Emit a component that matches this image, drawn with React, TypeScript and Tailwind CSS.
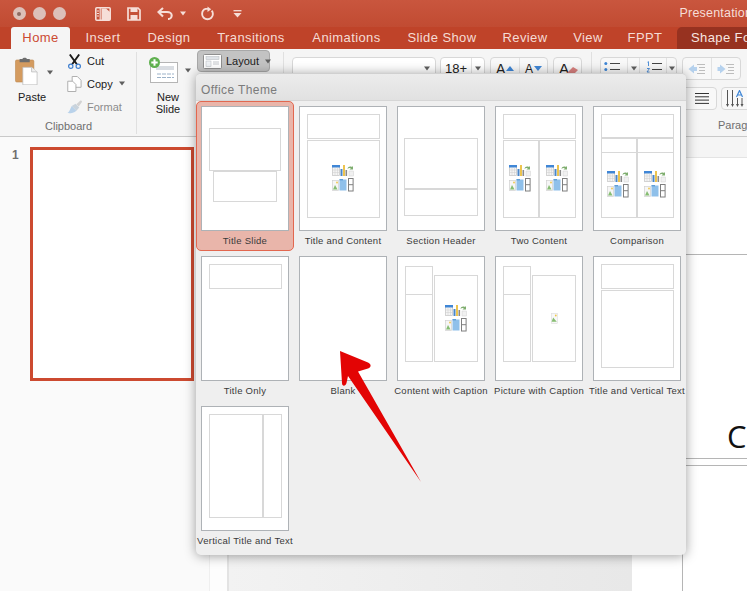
import React from "react";

const tabs = [
  { t: "Insert", w: "w-[66px]" },
  { t: "Design", w: "w-[66px]" },
  { t: "Transitions", w: "w-[98px]" },
  { t: "Animations", w: "w-[93px]" },
  { t: "Slide Show", w: "w-[98px]" },
  { t: "Review", w: "w-[68px]" },
  { t: "View", w: "w-[58px]" },
  { t: "FPPT", w: "w-[56px]" },
];

function Caret({ className = "" }: { className?: string }) {
  return (
    <svg width="6" height="5" viewBox="0 0 6 5" className={`shrink-0 ${className}`}>
      <path d="M0 0.5H6L3 4.5Z" fill="#5f5f5f" />
    </svg>
  );
}

function Cluster({ x, y }: { x: number; y: number }) {
  return (
    <g transform={`translate(${x} ${y})`}>
      <rect x="0.5" y="0.5" width="7" height="10" fill="#f4f4f4" stroke="#c4c4c4" strokeWidth="0.7" />
      <rect x="0" y="0" width="8" height="2.5" fill="#3f86d6" />
      <path d="M0 5H8M0 7.5H8M3 2.5V11M5.5 2.5V11" stroke="#cfcfcf" strokeWidth="0.5" />
      <rect x="8.5" y="4" width="2" height="7" fill="#4a86c8" />
      <rect x="11" y="0" width="2" height="11" fill="#ecc44f" />
      <rect x="13.5" y="5" width="1.6" height="6" fill="#8a8a8a" />
      <path d="M15.5 4C16 1.5 18 1 20 2L21 1V4.5H17.5L18.8 3.2C17.5 2.8 16.5 3 15.5 4Z" fill="#7fae6f" />
      <rect x="17" y="6" width="4.5" height="5" fill="#f1f1f1" stroke="#cfcfcf" strokeWidth="0.5" />
      <rect x="0.5" y="15.5" width="6" height="10" fill="#f6f6f6" stroke="#d0d0d0" strokeWidth="0.7" />
      <path d="M1 24.5L3 20L5.5 24.5Z" fill="#86bd72" />
      <circle cx="5" cy="17.5" r="0.9" fill="#f0c64a" />
      <rect x="7.5" y="14.5" width="7" height="11" fill="#8fc0ea" />
      <rect x="7.5" y="14" width="3.5" height="1.4" fill="#5f9fd8" />
      <rect x="16.5" y="13.5" width="4.6" height="12.5" fill="#fff" stroke="#7f7f7f" strokeWidth="1" />
      <path d="M16.5 19.7H21" stroke="#7f7f7f" strokeWidth="1" />
    </g>
  );
}

function Pic({ x, y }: { x: number; y: number }) {
  return (
    <g transform={`translate(${x} ${y})`}>
      <rect x="0.3" y="0.3" width="6" height="10" fill="#f8f8f8" stroke="#dddddd" strokeWidth="0.6" />
      <path d="M0.6 8.8L2.2 4.5L3.8 6.5L5.8 8.8Z" fill="#86bd72" />
      <circle cx="4.8" cy="2.5" r="0.9" fill="#f0c64a" />
    </g>
  );
}

type R = [number, number, number, number];

function Thumb({ rects, children }: { rects: R[]; children?: React.ReactNode }) {
  return (
    <div className="w-[88px] h-[125px] shrink-0 border border-[#aeb2b6] bg-white">
      <svg width="86" height="123" viewBox="1 1 86 123" className="block">
        {rects.map(([a, b, c, d], i) => (
          <rect key={i} x={a + 0.5} y={b + 0.5} width={c - a} height={d - b} fill="none" stroke="#d8d8d8" strokeWidth="1" />
        ))}
        {children}
      </svg>
    </div>
  );
}

const layouts: { label: string; rects: R[]; extra?: React.ReactNode; selected?: boolean }[] = [
  { label: "Title Slide", selected: true, rects: [[8, 22, 79, 64], [12, 65, 75, 95]] },
  { label: "Title and Content", rects: [[8, 8, 80, 32], [8, 34, 80, 111]], extra: <Cluster x={33} y={59} /> },
  { label: "Section Header", rects: [[7, 32, 80, 82], [7, 83, 80, 109]] },
  {
    label: "Two Content",
    rects: [[8, 8, 80, 32], [8, 34, 43, 111], [44, 34, 80, 111]],
    extra: (
      <>
        <Cluster x={14} y={59} />
        <Cluster x={51} y={59} />
      </>
    ),
  },
  {
    label: "Comparison",
    rects: [[8, 8, 80, 31], [8, 32, 43, 46], [44, 32, 80, 46], [8, 46, 43, 111], [44, 46, 80, 111]],
    extra: (
      <>
        <Cluster x={14} y={65} />
        <Cluster x={51} y={65} />
      </>
    ),
  },
  { label: "Title Only", rects: [[8, 8, 80, 32]] },
  { label: "Blank", rects: [] },
  {
    label: "Content with Caption",
    rects: [[8, 10, 35, 38], [8, 38, 35, 105], [37, 19, 80, 105]],
    extra: <Cluster x={48} y={49} />,
  },
  {
    label: "Picture with Caption",
    rects: [[8, 10, 35, 38], [8, 38, 35, 105], [37, 19, 80, 105]],
    extra: <Pic x={56} y={57} />,
  },
  { label: "Title and Vertical Text", rects: [[8, 8, 80, 32], [8, 34, 80, 111]] },
  { label: "Vertical Title and Text", rects: [[8, 8, 61, 111], [62, 8, 80, 111]] },
];

function LayoutMenu() {
  return (
    <div className="absolute left-[196px] top-[73px] w-[490px] h-[482px] rounded-[5px] bg-[#efefef] border-t border-[#d0d0d0] shadow-[0_1px_12px_rgba(0,0,0,0.38)] overflow-hidden">
      <div className="h-[27px] border-b border-[#d6d6d6] bg-gradient-to-b from-[#ececec] to-[#e1e1e1] pl-[5px] pt-[7px] text-[12px] leading-[18px] tracking-[0.4px] text-[#7b7b7b]">
        Office Theme
      </div>
      <div className="grid grid-cols-[repeat(5,98px)] auto-rows-[150px]">
        {layouts.map((l) => (
          <div
            key={l.label}
            className={
              l.selected
                ? "flex flex-col items-center pt-[4px] rounded-[5px] border border-[#e2674f] bg-[#e9b5aa]"
                : "flex flex-col items-center pt-[4px] border border-transparent"
            }
          >
            <Thumb rects={l.rects}>{l.extra}</Thumb>
            <div className="mt-[3px] whitespace-nowrap text-[9.5px] leading-[14px] tracking-[0.27px] text-[#3a3a3a]">{l.label}</div>
          </div>
        ))}
      </div>
    </div>
  );
}

function TitleBar() {
  return (
    <div className="h-[27px] flex items-center bg-gradient-to-b from-[#c9563e] to-[#c14b32] text-[#f6ded8]">
      <div className="flex items-center gap-[7.5px] pl-[13px]">
        <div className="w-[12.5px] h-[12.5px] rounded-full bg-[#dcc0b9] flex items-center justify-center">
          <div className="w-[4px] h-[4px] rounded-full bg-[#8c6a62]" />
        </div>
        <div className="w-[12.5px] h-[12.5px] rounded-full bg-[#dcc0b9]" />
        <div className="w-[12.5px] h-[12.5px] rounded-full bg-[#dcc0b9]" />
      </div>
      <div className="ml-[13px] w-px h-[16px] bg-[#b8462e]" />
      <svg width="16" height="14" viewBox="0 0 16 14" className="ml-[16px] shrink-0">
        <rect x="0.8" y="0.8" width="14.4" height="12.4" rx="1" fill="none" stroke="#f6ded8" strokeWidth="1.6" />
        <path d="M5.2 1V13" stroke="#f6ded8" strokeWidth="1.2" />
        <path d="M6.5 1.5H11L15 5V13H6.5Z" fill="#f6ded8" />
        <path d="M2 4H4M2 6.5H4M2 9H4" stroke="#f6ded8" strokeWidth="1" />
      </svg>
      <svg width="14" height="14" viewBox="0 0 14 14" className="ml-[16px] shrink-0">
        <path d="M1 1H11L13 3V13H1Z" fill="none" stroke="#f6ded8" strokeWidth="1.7" />
        <rect x="3.5" y="1" width="7" height="4" fill="#f6ded8" />
        <rect x="3.5" y="8" width="7" height="5" fill="#f6ded8" />
      </svg>
      <svg width="16" height="13" viewBox="0 0 16 13" className="ml-[16px] shrink-0">
        <path d="M6 1L1.5 5L6 9.5M2 5H10C13 5 14.7 6.8 14.7 8.4C14.7 10.4 13 12 11 12" fill="none" stroke="#f6ded8" strokeWidth="2.1" />
      </svg>
      <svg width="6" height="5" viewBox="0 0 6 5" className="ml-[7px] shrink-0">
        <path d="M0 0.5H6L3 4.5Z" fill="#f6ded8" />
      </svg>
      <svg width="13" height="15" viewBox="0 0 14 15" className="ml-[15px] shrink-0">
        <path d="M7.5 2.5H5C2.8 3.2 1.2 5.2 1.2 8C1.2 11.2 3.8 13.7 7 13.7C10.2 13.7 12.8 11.2 12.8 8C12.8 6.6 12.3 5.4 11.5 4.4" fill="none" stroke="#f6ded8" strokeWidth="2" />
        <path d="M7 0V6L11 3Z" fill="#f6ded8" />
      </svg>
      <svg width="9" height="8" viewBox="0 0 9 8" className="ml-[19px] shrink-0">
        <path d="M0.5 0.7H8.5" stroke="#f6ded8" strokeWidth="1.3" />
        <path d="M0.5 3H8.5L4.5 7.5Z" fill="#f6ded8" />
      </svg>
      <div className="ml-[438px] whitespace-nowrap text-[12.5px] leading-none tracking-[0.2px]">Presentation1</div>
    </div>
  );
}

function Tabs() {
  return (
    <div className="h-[22px] flex items-stretch pl-[11px] bg-[#bf4329] text-[13px] font-medium tracking-[0.4px] whitespace-nowrap">
      <div className="w-[59px] shrink-0 rounded-t-[3px] bg-[#f5f5f5] text-[#cc4a32] flex items-center justify-center">Home</div>
      {tabs.map((t) => (
        <div key={t.t} className={`${t.w} shrink-0 text-[#f5dcd5] flex items-center justify-center`}>
          {t.t}
        </div>
      ))}
      <div className="ml-[4px] flex-1 rounded-tl-[5px] bg-[#973220] text-[#f7e6e1] pl-[14px] flex items-center overflow-hidden">Shape Format</div>
    </div>
  );
}

function PasteIcon() {
  return (
    <svg width="23" height="28" viewBox="0 0 25 30" className="block shrink-0">
      <rect x="0.5" y="3" width="20" height="24" rx="1.5" fill="#d49b5f" stroke="#b88449" strokeWidth="0.6" />
      <path d="M5 4V2H8C8.5 0 12.5 0 13 2H16V5.5H5Z" fill="#6d6d6d" />
      <path d="M8.5 11H18L24 16V30H8.5Z" fill="#fff" stroke="#b9b9b9" strokeWidth="0.8" />
      <path d="M18 11V16H24" fill="#efefef" stroke="#b9b9b9" strokeWidth="0.8" />
    </svg>
  );
}

function SmallIcons({ kind }: { kind: "cut" | "copy" | "format" }) {
  if (kind === "cut")
    return (
      <svg width="15" height="15" viewBox="0 0 16 16" className="block shrink-0">
        <path d="M3 0.5L10.5 11M13 0.5L5.5 11" stroke="#1a1a1a" strokeWidth="2" />
        <circle cx="4" cy="13" r="2.3" fill="none" stroke="#3f7fcf" strokeWidth="1.3" />
        <circle cx="12" cy="13" r="2.3" fill="none" stroke="#3f7fcf" strokeWidth="1.3" />
      </svg>
    );
  if (kind === "copy")
    return (
      <svg width="15" height="16" viewBox="0 0 16 17" className="block shrink-0">
        <path d="M5.5 0.5H11L15 4.5V12H5.5Z" fill="#fff" stroke="#ababab" />
        <path d="M0.8 5.5H6L9.5 9V16.5H0.8Z" fill="#fff" stroke="#ababab" />
      </svg>
    );
  return (
    <svg width="16" height="15" viewBox="0 0 17 15" className="block shrink-0">
      <path d="M10 5L14 1.5C15 0.7 16.5 2 15.7 3L12.5 7.5Z" fill="#d3d3d3" />
      <path d="M9 4.5L13 8.5L10 12L5 7Z" fill="#c9d3dc" />
      <path d="M5 7L10 12C7 14.5 3 15 0.5 14.5C2.5 13.5 3 11 5 7Z" fill="#b9d2ea" />
    </svg>
  );
}

function Segment({ className, children }: { className: string; children?: React.ReactNode }) {
  return (
    <div className={`h-[23px] rounded-[4px] border border-[#d8d8d8] bg-[#f8f8f8] flex items-center shrink-0 ${className}`}>{children}</div>
  );
}

function ListLines({ numbered }: { numbered?: boolean }) {
  return (
    <svg width="17" height="16" viewBox="0 0 17 16" className="block shrink-0">
      <path d="M6 2.5H16M6 8.5H16" stroke="#444" strokeWidth="1" />
      {numbered ? (
        <path d="M1.5 1.2L2.5 0.7V5M1 7.5H3.5L1 11H3.5" fill="none" stroke="#3f86d6" strokeWidth="0.9" />
      ) : (
        <>
          <circle cx="1.8" cy="2.5" r="1.5" fill="#3f86d6" />
          <circle cx="1.8" cy="8.5" r="1.5" fill="#3f86d6" />
        </>
      )}
    </svg>
  );
}

function Indent({ flip }: { flip?: boolean }) {
  return (
    <svg width="18" height="12" viewBox="0 0 18 12" className="block shrink-0">
      {flip ? (
        <path d="M8.5 6L3 1.5V4H0.5V8H3V10.5Z" fill="#b6d2ee" />
      ) : (
        <path d="M0.5 6L6 1.5V4H9V8H6V10.5Z" fill="#b6d2ee" />
      )}
      <path d="M9 1.5H17M11 4.5H17M11 7.5H17M9 10.5H17" stroke="#bdbdbd" strokeWidth="1" />
    </svg>
  );
}

function Ribbon() {
  return (
    <div className="h-[88px] flex items-start bg-[#f5f5f5] border-b border-[#c9c9c9] text-[11px] leading-[12px] text-[#202020] whitespace-nowrap overflow-hidden">
      {/* Clipboard */}
      <div className="w-[137px] h-[82px] mt-[3px] shrink-0 border-r border-[#e0e0e0] flex flex-col">
        <div className="flex h-[68px]">
          <div className="w-[67px] shrink-0 pl-[15px] pt-[5px] flex flex-col">
            <div className="flex items-start gap-[9px]">
              <PasteIcon />
              <Caret className="mt-[13px]" />
            </div>
            <div className="mt-[6px] ml-[3px]">Paste</div>
          </div>
          <div className="flex flex-col -mt-[2px]">
            <div className="h-[22px] flex items-center gap-[5px]">
              <SmallIcons kind="cut" />
              <span>Cut</span>
            </div>
            <div className="h-[23px] flex items-center gap-[5px]">
              <SmallIcons kind="copy" />
              <span>Copy</span>
              <Caret className="ml-[1px]" />
            </div>
            <div className="h-[23px] flex items-center gap-[4px] text-[#8c8c8c]">
              <SmallIcons kind="format" />
              <span>Format</span>
            </div>
          </div>
        </div>
        <div className="pl-[45px] text-[#6f6f6f]">Clipboard</div>
      </div>
      {/* Slides */}
      <div className="w-[147px] h-[82px] mt-[3px] shrink-0 border-r border-[#e0e0e0] flex">
        <div className="w-[60px] shrink-0 flex flex-col pt-[5px]">
          <div className="flex items-center pl-[12px]">
            <svg width="30" height="26" viewBox="0 0 30 26" className="block shrink-0">
              <rect x="1.5" y="5.5" width="27" height="20" fill="#fff" stroke="#b5b5b5" />
              <rect x="7" y="9" width="18" height="4" fill="#d9dde2" />
              <path d="M8 17H25M8 20.5H25" stroke="#9cb2c8" strokeWidth="1" strokeDasharray="4 1" />
              <circle cx="5.5" cy="5.5" r="5.5" fill="#5fb04f" />
              <path d="M5.5 2.3V8.7M2.3 5.5H8.7" stroke="#fff" strokeWidth="2" />
            </svg>
            <Caret className="ml-[6px]" />
          </div>
          <div className="mt-[8px] w-[62px] text-center">
            New
            <br />
            Slide
          </div>
        </div>
        <div className="-mt-[2px]">
          <div className="h-[22px] w-[73px] rounded-[4px] border border-[#a8a8a8] bg-[#c3c3c3] flex items-center pl-[5px] gap-[4px]">
            <svg width="19" height="15" viewBox="0 0 19 15" className="block shrink-0">
              <rect x="0.5" y="0.5" width="18" height="14" rx="1" fill="#fff" stroke="#8f8f8f" />
              <rect x="3" y="2.5" width="13" height="3" fill="#dfe3e8" stroke="#b4b8bd" strokeWidth="0.5" />
              <rect x="3" y="7" width="5" height="5.5" fill="#eef1f4" stroke="#b4b8bd" strokeWidth="0.5" />
              <path d="M10 8H16M10 10H16" stroke="#b4b8bd" strokeWidth="0.8" />
            </svg>
            <span>Layout</span>
            <Caret className="ml-[2px]" />
          </div>
        </div>
      </div>
      {/* Font */}
      <div className="w-[308px] h-[82px] mt-[3px] shrink-0 border-r border-[#e0e0e0] flex items-start pl-[8px] pt-[5px] text-[13px]">
        <Segment className="w-[144px] justify-end bg-white pr-[5px]">
          <Caret />
        </Segment>
        <Segment className="ml-[4px] w-[45px] bg-white pl-[4px]">
          <span className="w-[26px]">18+</span>
          <div className="h-full border-l border-[#e2e2e2] flex-1 flex items-center justify-center">
            <Caret />
          </div>
        </Segment>
        <Segment className="ml-[5px] w-[58px] text-[14px]">
          <div className="w-[29px] h-full border-r border-[#e2e2e2] flex items-center pl-[5px] gap-[1px]">
            <span>A</span>
            <svg width="8" height="5" viewBox="0 0 8 5" className="shrink-0">
              <path d="M0 5L4 0L8 5Z" fill="#3f86d6" />
            </svg>
          </div>
          <div className="flex-1 flex items-center pl-[5px] gap-[1px] text-[12px]">
            <span>A</span>
            <svg width="8" height="5" viewBox="0 0 8 5" className="shrink-0">
              <path d="M0 0L4 5L8 0Z" fill="#3f86d6" />
            </svg>
          </div>
        </Segment>
        <Segment className="ml-[5px] w-[29px] pl-[5px] text-[15px]">
          <span>A</span>
          <svg width="12" height="10" viewBox="0 0 12 10" className="-ml-[3px] mt-[6px] shrink-0">
            <path d="M0 7L7 0L12 3L5 10H2Z" fill="#d9817f" />
          </svg>
        </Segment>
      </div>
      {/* Paragraph */}
      <div className="w-[155px] h-[82px] mt-[3px] shrink-0 pl-[8px] pt-[5px] flex flex-col">
        <div className="flex gap-[5px]">
          <Segment className="w-[77px]">
            <div className="w-[26px] pl-[3px]">
              <ListLines />
            </div>
            <div className="w-[12px] h-full border-l border-[#e2e2e2] flex items-center justify-center">
              <Caret />
            </div>
            <div className="w-[27px] h-full border-l border-[#e2e2e2] pl-[6px] pt-[3px]">
              <ListLines numbered />
            </div>
            <div className="flex-1 h-full border-l border-[#e2e2e2] flex items-center justify-center">
              <Caret />
            </div>
          </Segment>
          <Segment className="w-[59px]">
            <div className="w-[29px] h-full border-r border-[#e2e2e2] flex items-center justify-center">
              <Indent />
            </div>
            <div className="flex-1 flex items-center justify-center">
              <Indent flip />
            </div>
          </Segment>
        </div>
        <div className="flex gap-[4px] mt-[7px] ml-[60px]">
          <Segment className="w-[57px] justify-end pr-[7px]">
            <svg width="14" height="11" viewBox="0 0 14 11" className="block shrink-0">
              <path d="M0 0.5H14M0 3.8H14M0 7.1H14M0 10.4H14" stroke="#333" strokeWidth="1" />
            </svg>
          </Segment>
          <Segment className="w-[40px] pl-[4px]">
            <svg width="20" height="18" viewBox="0 0 20 18" className="block shrink-0">
              <path d="M1.5 0V15M6.5 0V15M11.5 8V15M16 8V15" stroke="#555" strokeWidth="1" />
              <path d="M0 14L1.5 17L3 14ZM5 14L6.5 17L8 14ZM10 14L11.5 17L13 14ZM14.5 14L16 17L17.5 14Z" fill="#555" />
              <path d="M10.5 7L13.5 0.5L16.5 7M11.5 5H15.5" fill="none" stroke="#3f86d6" strokeWidth="1.2" />
            </svg>
          </Segment>
        </div>
        <div className="mt-[9px] ml-[118px] text-[#6f6f6f]">Paragraph</div>
      </div>
    </div>
  );
}

function Main() {
  return (
    <div className="flex h-[454px]">
      <div className="w-[210px] shrink-0 bg-[#fafafa] border-r border-[#efefef] flex items-start pt-[10px]">
        <div className="w-[30px] shrink-0 pl-[12px] text-[12px] leading-[16px] font-bold text-[#6f6f6f]">1</div>
        <div className="w-[164px] h-[234px] shrink-0 bg-white border-[3px] border-[#cc4a30]" />
      </div>
      <div className="w-[19px] shrink-0 bg-[#fdfdfd] border-r-2 border-[#e3e3e3]" />
      <div className="w-[403px] shrink-0 bg-gradient-to-r from-[#f2f2f2] to-[#e8e8e8]" />
      <div className="flex-1 bg-white flex flex-col overflow-hidden">
        <div className="h-[21px] bg-[#f5f5f5] border-b border-[#e4e4e4]" />
        <div className="h-[97px] border-b border-[#b5b5b5]" />
        <div className="h-[204px] border-b border-[#b5b5b5] flex items-end pl-[95px] pb-[6px]">
          <span className="text-[31px] leading-[31px] whitespace-nowrap text-[#111]" style={{ fontFamily: '"Open Sans", sans-serif' }}>
            Cl
          </span>
        </div>
        <div className="h-[7px] border-b border-[#b5b5b5]" />
        <div className="flex-1 w-[51px] border-r border-[#b5b5b5]" />
      </div>
    </div>
  );
}

export default function App() {
  return (
    <div className="relative w-[747px] h-[591px] overflow-hidden bg-white font-['Liberation_Sans',Arial,sans-serif]">
      <TitleBar />
      <Tabs />
      <Ribbon />
      <Main />
      <LayoutMenu />
      <svg width="100" height="140" viewBox="0 0 100 140" className="absolute left-[335px] top-[346px]">
        <path
          d="M5 5L33 16.5C36.5 18 36.5 21.5 33 22.5L23 25.5L86 136L13 30L11.5 37C10.5 40.5 7 40.5 7 37Z"
          fill="#e30404"
        />
      </svg>
    </div>
  );
}
